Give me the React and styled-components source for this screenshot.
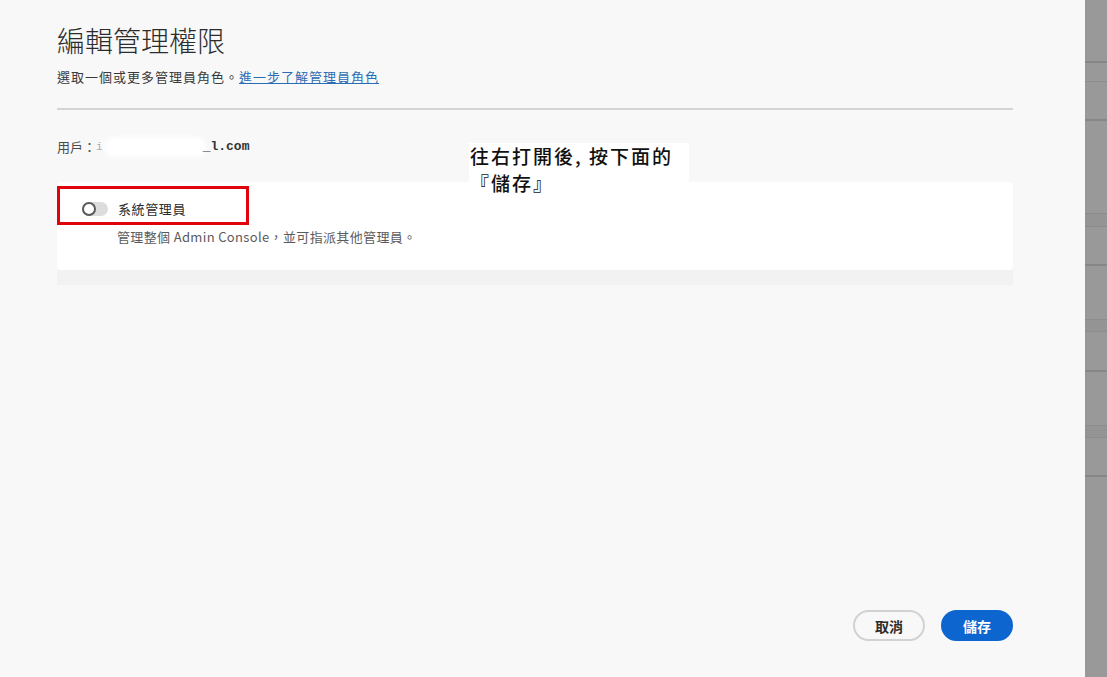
import React from "react";
import styled, { createGlobalStyle } from "styled-components";

const GlobalStyle = createGlobalStyle`
  html, body {
    margin: 0;
    padding: 0;
    background: #f8f8f8;
  }
  body {
    font-family: "Noto Sans CJK TC", "Noto Sans", sans-serif;
    color: #2c2c2c;
  }
`;

const stripSegments = [
  { h: 61, c: "#999999" },
  { h: 2, c: "#878787" },
  { h: 18, c: "#999999" },
  { h: 1, c: "#8d8d8d" },
  { h: 37, c: "#999999" },
  { h: 2, c: "#878787" },
  { h: 92, c: "#999999" },
  { h: 1, c: "#8d8d8d" },
  { h: 12, c: "#949494" },
  { h: 1, c: "#8d8d8d" },
  { h: 37, c: "#999999" },
  { h: 2, c: "#878787" },
  { h: 53, c: "#999999" },
  { h: 1, c: "#8d8d8d" },
  { h: 11, c: "#949494" },
  { h: 1, c: "#8d8d8d" },
  { h: 38, c: "#999999" },
  { h: 2, c: "#878787" },
  { h: 53, c: "#999999" },
  { h: 1, c: "#8d8d8d" },
  { h: 11, c: "#949494" },
  { h: 1, c: "#8d8d8d" },
  { h: 37, c: "#999999" },
  { h: 2, c: "#878787" },
  { h: 200, c: "#999999" },
];

const App = () => {
  return (
    <>
      <GlobalStyle />
      <Page>
        <Main>
          <Title>編輯管理權限</Title>
          <Subtitle>
            選取一個或更多管理員角色。<Link href="#">進一步了解管理員角色</Link>
          </Subtitle>
          <Divider />
          <UserRow>
            用戶：<Dim>i</Dim>
            <Redacted />
            <Email>_l.com</Email>
          </UserRow>
          <Card>
            <RoleRow>
              <Toggle>
                <Knob />
              </Toggle>
              <RoleName>系統管理員</RoleName>
            </RoleRow>
            <RoleDesc>管理整個 Admin Console，並可指派其他管理員。</RoleDesc>
            <Highlight />
          </Card>
          <CardFoot />
          <Spacer />
          <Footer>
            <Button>取消</Button>
            <Button $primary>儲存</Button>
          </Footer>
          <Note>
            <NoteLine>往右打開後, 按下面的</NoteLine>
            <NoteLine>『儲存』</NoteLine>
          </Note>
        </Main>
        <SideStrip>
          {stripSegments.map((s, i) => (
            <StripPart key={i} $h={s.h} $c={s.c} />
          ))}
        </SideStrip>
      </Page>
    </>
  );
};

const Page = styled.div`
  display: flex;
  width: 1107px;
  height: 677px;
  overflow: hidden;
`;

const Main = styled.div`
  position: relative;
  width: 956px;
  padding: 22px 72px 36px 57px;
  display: flex;
  flex-direction: column;
  box-sizing: content-box;
  height: 619px;
`;

const Title = styled.h1`
  margin: 0;
  font-size: 28px;
  line-height: 36px;
  font-weight: 300;
  color: #2c2c2c;
`;

const Subtitle = styled.p`
  margin: 10px 0 0;
  font-size: 13px;
  line-height: 18px;
  letter-spacing: 1px;
  color: #3a3a3a;
`;

const Link = styled.a`
  text-decoration: underline;
  color: #2a6db5;
`;

const Divider = styled.div`
  margin-top: 22px;
  height: 2px;
  background: #d4d4d4;
`;

const UserRow = styled.div`
  margin-top: 28px;
  display: flex;
  align-items: center;
  font-size: 13px;
  line-height: 18px;
  color: #4a4a4a;
`;

const Dim = styled.span`
  font-family: "Liberation Mono", monospace;
  color: #aaa;
  font-size: 11px;
`;

const Redacted = styled.span`
  display: inline-block;
  width: 96px;
  height: 14px;
  margin-left: 4px;
  background: #ffffff;
  border-radius: 7px;
  box-shadow: 0 0 4px 3px #ffffff;
`;

const Email = styled.span`
  font-family: "Liberation Mono", "DejaVu Sans Mono", monospace;
  font-weight: 700;
  font-size: 13px;
  color: #333;
`;

const Card = styled.div`
  position: relative;
  margin-top: 26px;
  height: 88px;
  box-sizing: border-box;
  padding: 18px 0 0 25px;
  background: #ffffff;
  border-radius: 4px;
`;

const RoleRow = styled.div`
  display: flex;
  align-items: center;
  gap: 10px;
  height: 18px;
`;

const Toggle = styled.span`
  position: relative;
  width: 26px;
  height: 14px;
  border-radius: 7px;
  background: #dcdcdc;
  display: inline-flex;
  align-items: center;
`;

const Knob = styled.span`
  width: 10px;
  height: 10px;
  border-radius: 50%;
  border: 2px solid #5a5a5a;
  background: #ffffff;
`;

const RoleName = styled.span`
  font-size: 13px;
  line-height: 18px;
  letter-spacing: 0.6px;
  color: #2c2c2c;
`;

const RoleDesc = styled.p`
  margin: 10px 0 0 35px;
  font-size: 13px;
  line-height: 18px;
  letter-spacing: 0.35px;
  color: #5b5b5b;
`;

const Highlight = styled.div`
  position: absolute;
  left: 0;
  top: 4px;
  width: 192px;
  height: 39px;
  box-sizing: border-box;
  border: 3px solid #e0030b;
`;

const CardFoot = styled.div`
  height: 15px;
  background: #f2f2f2;
`;

const Spacer = styled.div`
  flex: 1;
`;

const Footer = styled.div`
  display: flex;
  justify-content: flex-end;
  gap: 16px;
`;

const Button = styled.button`
  width: 72px;
  height: 31px;
  border-radius: 16px;
  font-family: "Noto Sans CJK TC", sans-serif;
  font-size: 14px;
  font-weight: 700;
  cursor: pointer;
  border: 2px solid ${(p) => (p.$primary ? "#0d66d0" : "#d2d2d2")};
  background: ${(p) => (p.$primary ? "#0d66d0" : "#f8f8f8")};
  color: ${(p) => (p.$primary ? "#ffffff" : "#2c2c2c")};
`;

const Note = styled.div`
  position: absolute;
  left: 469px;
  top: 143px;
  width: 220px;
  height: 39px;
  background: #ffffff;
  font-family: "Noto Sans CJK TC", serif;
  font-weight: 500;
  font-size: 19px;
  letter-spacing: 2px;
  color: #111;
  white-space: nowrap;
`;

const NoteLine = styled.div`
  height: 28px;
  line-height: 28px;
  margin-top: -1px;
  padding-left: 1px;
`;

const SideStrip = styled.div`
  width: 22px;
  display: flex;
  flex-direction: column;
`;

const StripPart = styled.div`
  flex: none;
  height: ${(p) => p.$h}px;
  background: ${(p) => p.$c};
`;

export default App;
